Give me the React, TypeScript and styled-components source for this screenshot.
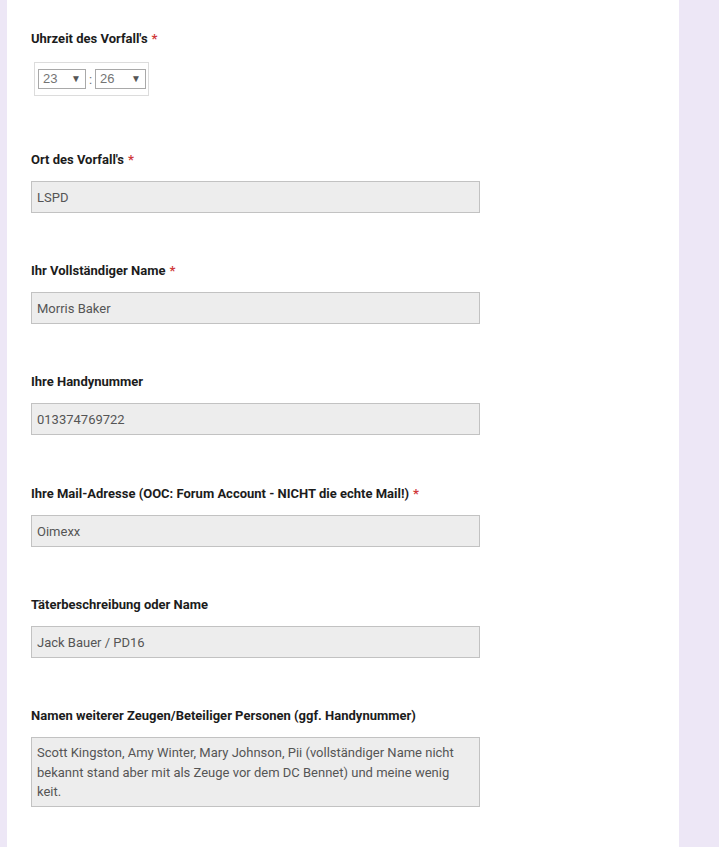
import React from "react";
import styled, { createGlobalStyle } from "styled-components";

const Global = createGlobalStyle`
  html, body { margin: 0; padding: 0; }
  body { background: #ede7f6; font-family: Roboto, "Liberation Sans", Arial, sans-serif; }
`;

const Page = styled.div`
  display: flex;
  min-height: 100vh;
`;

const Panel = styled.main`
  margin-left: 7px;
  width: 672px;
  min-height: 100vh;
  background: #ffffff;
  padding: 30px 0 0 24px;
  box-sizing: border-box;
`;

const Field = styled.section<{ $gap?: number }>`
  padding-bottom: ${(p) => p.$gap ?? 49}px;
`;

const Label = styled.label`
  display: block;
  font: 700 13px/18px Roboto, "Liberation Sans", Arial, sans-serif;
  color: #1c1c1c;
  margin-bottom: 12px;
`;

const Star = styled.span`
  color: #d03a3a;
  margin-left: 4px;
`;

const TextInput = styled.input`
  display: block;
  box-sizing: border-box;
  width: 449px;
  height: 32px;
  margin: 0;
  padding: 0 5px;
  border: 1px solid #c2c2c2;
  background: #ededed;
  font: 400 13px Roboto, "Liberation Sans", Arial, sans-serif;
  color: #555555;
  outline: none;
`;

const TextArea = styled.textarea`
  display: block;
  box-sizing: border-box;
  width: 449px;
  height: 70px;
  margin: 0;
  padding: 5px 5px;
  border: 1px solid #c2c2c2;
  background: #ededed;
  font: 400 13px/19.5px Roboto, "Liberation Sans", Arial, sans-serif;
  color: #555555;
  resize: none;
  overflow: hidden;
  outline: none;
`;

const TimeBox = styled.div`
  display: inline-flex;
  align-items: center;
  box-sizing: border-box;
  height: 34px;
  margin: 2px 0 0 3px;
  padding: 0 2px 0 3px;
  border: 1px solid #dcdcdc;
`;

const Select = styled.div<{ $w: number }>`
  position: relative;
  box-sizing: border-box;
  width: ${(p) => p.$w}px;
  height: 20px;
  border: 1px solid #a9a9a9;
  padding-left: 4px;
  font: 400 13px/18px "Liberation Sans", Arial, sans-serif;
  color: #747474;
  background: #ffffff;
`;

const Arrow = styled.span`
  position: absolute;
  right: 4px;
  top: 0;
  font-size: 10px;
  line-height: 18px;
  color: #555555;
`;

const Colon = styled.span`
  width: 9px;
  text-align: center;
  font: 400 13px "Liberation Sans", Arial, sans-serif;
  color: #747474;
`;

const fields: { label: string; value: string; required?: boolean; gap?: number }[] = [
  { label: "Ort des Vorfall's", value: "LSPD", required: true },
  { label: "Ihr Vollständiger Name", value: "Morris Baker", required: true },
  { label: "Ihre Handynummer", value: "013374769722", gap: 50 },
  {
    label: "Ihre Mail-Adresse (OOC: Forum Account - NICHT die echte Mail!)",
    value: "Oimexx",
    required: true,
  },
  { label: "Täterbeschreibung oder Name", value: "Jack Bauer / PD16" },
];

export default function App() {
  return (
    <>
      <Global />
      <Page>
        <Panel>
          <Field $gap={55}>
            <Label>
              Uhrzeit des Vorfall's<Star>*</Star>
            </Label>
            <TimeBox>
              <Select $w={48} role="combobox">
                23<Arrow>▼</Arrow>
              </Select>
              <Colon>:</Colon>
              <Select $w={51} role="combobox">
                26<Arrow>▼</Arrow>
              </Select>
            </TimeBox>
          </Field>
          {fields.map((f) => (
            <Field key={f.label} $gap={f.gap}>
              <Label>
                {f.label}
                {f.required && <Star>*</Star>}
              </Label>
              <TextInput readOnly value={f.value} />
            </Field>
          ))}
          <Field>
            <Label>Namen weiterer Zeugen/Beteiliger Personen (ggf. Handynummer)</Label>
            <TextArea
              readOnly
              value="Scott Kingston, Amy Winter, Mary Johnson, Pii (vollständiger Name nicht bekannt stand aber mit als Zeuge vor dem DC Bennet) und meine wenig keit."
            />
          </Field>
        </Panel>
      </Page>
    </>
  );
}
